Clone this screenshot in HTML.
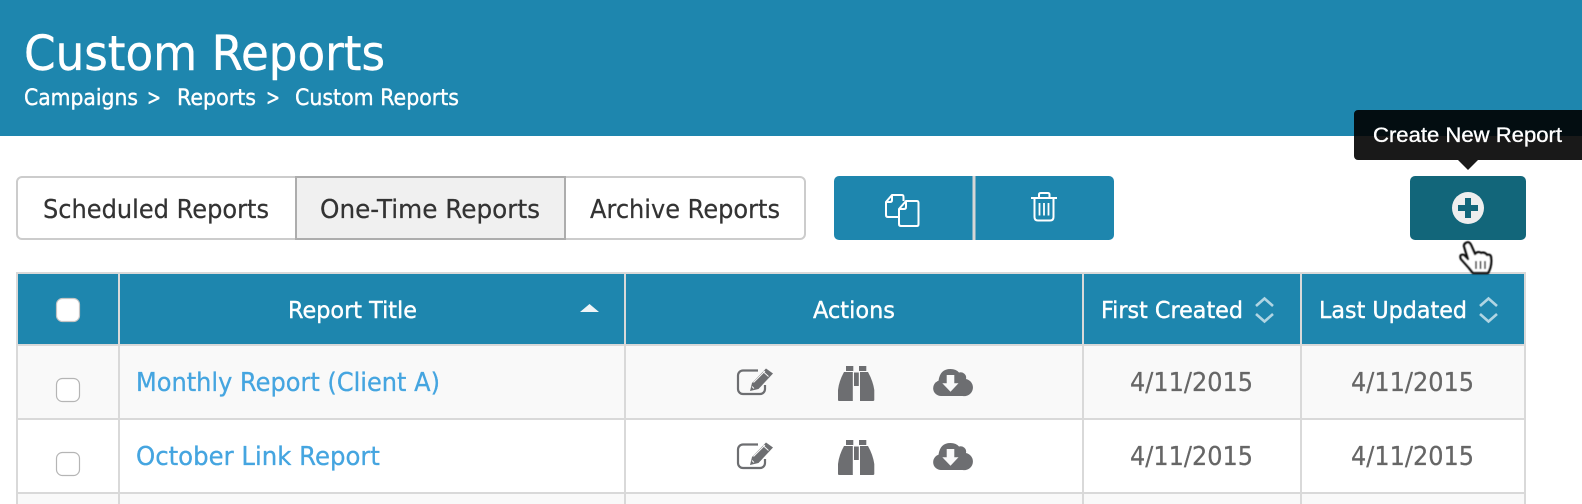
<!DOCTYPE html>
<html>
<head>
<meta charset="utf-8">
<style>
html,body{margin:0;padding:0;background:#fff;width:1582px;height:504px;overflow:hidden}
svg{display:block}
text{font-family:"DejaVu Sans","Liberation Sans",sans-serif;stroke-width:.4px;stroke-linejoin:round}
.w{fill:#fff;stroke:#fff}
.d{fill:#333;stroke:#333;stroke-width:.25px}
.l{fill:#45a5e0;stroke:#45a5e0;stroke-width:.3px}
.g{fill:#666;stroke:#666;stroke-width:.25px}
</style>
</head>
<body>
<svg width="1582" height="504" viewBox="0 0 1582 504" xmlns="http://www.w3.org/2000/svg">
<defs>
<filter id="b" x="-30%" y="-30%" width="160%" height="160%"><feGaussianBlur stdDeviation="1.200"/></filter>
<filter id="s" x="-10%" y="-10%" width="120%" height="120%"><feGaussianBlur stdDeviation=".45"/></filter>
<g id="edit">
  <path d="M758 370.500H743a5 5 0 0 0-5 5V389a5 5 0 0 0 5 5H760a5 5 0 0 0 5-5V385" fill="none" stroke="#6d6e71" stroke-width="2.200"/>
  <path d="M750 391L752 383 766 368.500 773 373.500 758.500 389Z" fill="#6d6e71"/>
  <path d="M753.500 382.500L765 371M752 386.500L754 388.500M763 371.500L768.500 376.500" stroke="#f9f9f9" stroke-width="1" fill="none"/>
</g>
<g id="bino" fill="#6d6e71">
  <rect x="846" y="366" width="7.300" height="5"/>
  <rect x="859" y="366" width="7.300" height="5"/>
  <path d="M844 372H852.800V401H839Q838 401 838 400V390Q839 381 844 372Z"/>
  <path d="M868 372H860V401H873Q874.300 401 874.300 400V390Q873 381 868 372Z"/>
  <rect x="854" y="372.500" width="4.800" height="13.500"/>
</g>
<g id="cloud">
  <path d="M941 396A7.800 7.800 0 0 1 938.500 380.800Q940 369 950.500 369Q956 369 959 372.500A5.500 5.500 0 0 1 966 379A8.500 8.500 0 0 1 962.500 396Z" fill="#6d6e71"/>
  <path d="M946.700 375H954.300V383.300H958.500L950.500 391.700 942.300 383.300H946.700Z" fill="#f9f9f9"/>
</g>
<path id="sort" d="M1 9L9.500 1.500 18 9M1 17L9.500 24.500 18 17" fill="none" stroke="#fff" stroke-opacity=".65" stroke-width="2.600"/>
</defs>

<rect width="1582" height="136" fill="#1e86ae"/>
<text class="w" x="24" y="70" font-size="48" textLength="361" lengthAdjust="spacingAndGlyphs">Custom Reports</text>
<text class="w" x="24" y="105" font-size="22.500" textLength="114" lengthAdjust="spacingAndGlyphs">Campaigns</text>
<text class="w" x="147" y="105" font-size="22" textLength="14" lengthAdjust="spacingAndGlyphs">&gt;</text>
<text class="w" x="177" y="105" font-size="22.500" textLength="79" lengthAdjust="spacingAndGlyphs">Reports</text>
<text class="w" x="266" y="105" font-size="22" textLength="14" lengthAdjust="spacingAndGlyphs">&gt;</text>
<text class="w" x="295" y="105" font-size="22.500" textLength="164" lengthAdjust="spacingAndGlyphs">Custom Reports</text>

<!-- tabs -->
<rect x="295" y="177" width="270" height="62" fill="#f0f0f0"/>
<rect x="17" y="177" width="788" height="62" rx="5" fill="none" stroke="#ccc" stroke-width="2"/>
<path d="M296 239V177H565V239M295 239H566" fill="none" stroke="#adadad" stroke-width="2"/>
<text class="d" x="43" y="218" font-size="25.500" textLength="226" lengthAdjust="spacingAndGlyphs">Scheduled Reports</text>
<text class="d" x="320" y="218" font-size="25.500" textLength="220" lengthAdjust="spacingAndGlyphs">One-Time Reports</text>
<text class="d" x="590" y="218" font-size="25.500" textLength="190" lengthAdjust="spacingAndGlyphs">Archive Reports</text>

<!-- action buttons -->
<rect x="834" y="176" width="280" height="64" rx="5" fill="#1e86ae"/>
<rect x="972.500" y="176" width="3" height="64" fill="#d6d6d6"/>
<g fill="none" stroke="#fff" stroke-width="2" stroke-linejoin="round">
  <path d="M903.500 201V197Q903.500 195 902 195H892L886 202V215Q886 217 888 217H898.500"/>
  <path d="M892 195V200Q892 202 890 202H886"/>
  <path d="M906 201H917Q918.500 201 918.500 203V224Q918.500 226 917 226H901Q899 226 899 224V209Z"/>
  <path d="M906 201V207Q906 209 904 209H899"/>
  <path d="M1031 198H1057"/>
  <path d="M1039 197.500V194.500Q1039 193 1041 193H1047.500Q1049.500 193 1049.500 194.500V197.500"/>
  <path d="M1034.500 198V217Q1034.500 220.500 1038 220.500H1050Q1053.500 220.500 1053.500 217V198"/>
  <path d="M1039.500 203V215.500M1044 203V215.500M1048.500 203V215.500" stroke-width="1.800"/>
</g>

<!-- create button -->
<rect x="1410" y="176" width="116" height="64" rx="5" fill="#12667a"/>
<circle cx="1468" cy="208" r="16" fill="#eee"/>
<path d="M1465 198H1471V205H1478V211H1471V218H1465V211H1458V205H1465Z" fill="#12667a"/>

<!-- tooltip -->
<path d="M1358 110H1582V160H1478L1468 170 1458 160H1358A4 4 0 0 1 1354 156V114A4 4 0 0 1 1358 110Z" fill="#000" fill-opacity=".9"/>
<text x="1373" y="142" font-size="21" class="w" textLength="189" lengthAdjust="spacingAndGlyphs" style="font-family:'Liberation Sans',sans-serif;stroke-width:.35px">Create New Report</text>

<!-- table -->
<rect x="18" y="274" width="1506" height="70" fill="#1e86ae"/>
<rect x="18" y="346" width="1506" height="72" fill="#f9f9f9"/>
<rect x="18" y="420" width="1506" height="72" fill="#fff"/>
<rect x="18" y="494" width="1506" height="10" fill="#f9f9f9"/>
<g fill="#d9d9d9">
  <rect x="16" y="272" width="1510" height="2"/>
  <rect x="16" y="344" width="1510" height="2"/>
  <rect x="16" y="418" width="1510" height="2"/>
  <rect x="16" y="492" width="1510" height="2"/>
  <rect x="16" y="272" width="2" height="232"/>
  <rect x="118" y="272" width="2" height="232"/>
  <rect x="624" y="272" width="2" height="232"/>
  <rect x="1082" y="272" width="2" height="232"/>
  <rect x="1300" y="272" width="2" height="232"/>
  <rect x="1524" y="272" width="2" height="232"/>
</g>
<g fill="#fff">
  <rect x="56.500" y="298.500" width="23" height="23" rx="6" stroke="#c4c4c4" stroke-width="1.200"/>
  <rect x="56.500" y="378.500" width="23" height="23" rx="6" stroke="#b5b5b5" stroke-width="1.200"/>
  <rect x="56.500" y="452.500" width="23" height="23" rx="6" stroke="#b5b5b5" stroke-width="1.200"/>
</g>
<text class="w" x="288" y="318" font-size="23.500" textLength="129" lengthAdjust="spacingAndGlyphs">Report Title</text>
<path d="M580 312L589.500 304 599 312Z" fill="#eef4f7"/>
<text class="w" x="813" y="318" font-size="23.500" textLength="82" lengthAdjust="spacingAndGlyphs">Actions</text>
<text class="w" x="1101" y="318" font-size="23.500" textLength="142" lengthAdjust="spacingAndGlyphs">First Created</text>
<use href="#sort" x="1255" y="297"/>
<text class="w" x="1319" y="318" font-size="23.500" textLength="148" lengthAdjust="spacingAndGlyphs">Last Updated</text>
<use href="#sort" x="1479" y="297"/>

<text class="l" x="136" y="391" font-size="25.500" textLength="304" lengthAdjust="spacingAndGlyphs">Monthly Report (Client A)</text>
<text class="l" x="136" y="465" font-size="25.500" textLength="244" lengthAdjust="spacingAndGlyphs">October Link Report</text>

<use href="#edit"/><use href="#bino"/><use href="#cloud"/>
<use href="#edit" y="74"/><use href="#bino" y="74"/><use href="#cloud" y="74"/>

<g font-size="25.500">
  <text class="g" x="1130" y="391" textLength="123" lengthAdjust="spacingAndGlyphs">4/11/2015</text>
  <text class="g" x="1351" y="391" textLength="123" lengthAdjust="spacingAndGlyphs">4/11/2015</text>
  <text class="g" x="1130" y="465" textLength="123" lengthAdjust="spacingAndGlyphs">4/11/2015</text>
  <text class="g" x="1351" y="465" textLength="123" lengthAdjust="spacingAndGlyphs">4/11/2015</text>
</g>

<!-- hand cursor -->
<path d="M1466 243Q1469 241 1471 245L1475 254Q1478 251 1481 253 1485 252 1487 255 1491 254 1491 258 1492 266 1488 273H1473L1469 268 1461 259Q1459 254 1464 255L1468 259 1464 246Q1464 244 1466 243Z" fill="#000" opacity=".5" filter="url(#b)"/>
<g filter="url(#s)">
<path d="M1466 243Q1469 241 1471 245L1475 254Q1478 251 1481 253 1485 252 1487 255 1491 254 1491 258 1492 266 1488 273H1473L1469 268 1461 259Q1459 254 1464 255L1468 259 1464 246Q1464 244 1466 243Z" fill="#fff" stroke="#111" stroke-width="2.400" stroke-linejoin="round"/>
<path d="M1476 261V269M1480.500 261V269M1485 261V269" stroke="#222" stroke-width="1.500" fill="none"/>
</g>
</svg>
</body>
</html>
